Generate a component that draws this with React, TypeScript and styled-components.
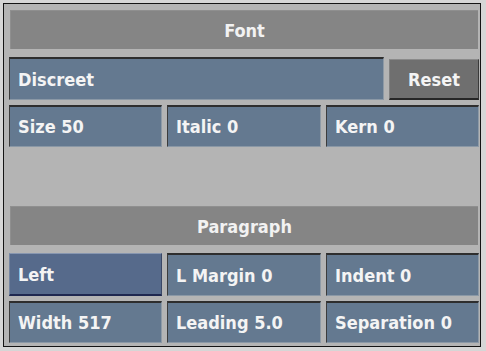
import styled, { createGlobalStyle } from 'styled-components';

const GlobalStyle = createGlobalStyle`
  html, body {
    margin: 0;
    padding: 0;
    background: #d6d6d6;
  }
  body {
    font-family: "DejaVu Sans Condensed", "DejaVu Sans", sans-serif;
  }
`;

const Frame = styled.div`
  box-sizing: border-box;
  margin: 3px 0 0 3px;
  width: 478px;
  height: 344px;
  border: 1px solid #141414;
  background: #b4b4b4;
  padding: 6px 1px 0 5px;
  display: flex;
  flex-direction: column;
`;

const Header = styled.div<{ $top?: number }>`
  box-sizing: border-box;
  height: 39px;
  margin: ${p => p.$top ?? 0}px 1px 0 1px;
  background: #858585;
  border-top: 1px solid #8f8f8f;
  border-left: 1px solid #8f8f8f;
  display: flex;
  align-items: center;
  justify-content: center;
  color: #f2f2f2;
  font-size: 18px;
  font-weight: bold;
`;

const Row = styled.div<{ $cols: string; $top: number; $height: number }>`
  display: grid;
  grid-template-columns: ${p => p.$cols};
  column-gap: 5px;
  margin-top: ${p => p.$top}px;
  height: ${p => p.$height}px;
`;

const Field = styled.div`
  box-sizing: border-box;
  background: #647990;
  border-top: 2px solid #2e2e2e;
  border-left: 1px solid #3c3c3c;
  border-right: 1px solid #8e9aa6;
  border-bottom: 1px solid #8a98a6;
  display: flex;
  align-items: center;
  padding-left: 8px;
  color: #f4f4f4;
  font-size: 18px;
  font-weight: bold;
  white-space: nowrap;
`;

const Button = styled.div<{ $tone: 'gray' | 'blue' }>`
  box-sizing: border-box;
  background: ${p => (p.$tone === 'gray' ? '#6f6f6f' : '#566a8b')};
  border-top: 1px solid ${p => (p.$tone === 'gray' ? '#8a8a8a' : '#8796b0')};
  border-left: 1px solid ${p => (p.$tone === 'gray' ? '#828282' : '#7485a2')};
  border-right: 1px solid ${p => (p.$tone === 'gray' ? '#3a3a3a' : '#3a4766')};
  border-bottom: 2px solid ${p => (p.$tone === 'gray' ? '#262626' : '#1f2850')};
  display: flex;
  align-items: center;
  justify-content: ${p => (p.$tone === 'gray' ? 'center' : 'flex-start')};
  padding-left: ${p => (p.$tone === 'gray' ? 0 : 8)}px;
  color: #f4f4f4;
  font-size: 18px;
  font-weight: bold;
`;

const ResetButton = styled(Button)`
  margin-top: 2px;
  height: 41px;
`;

export default function App() {
  return (
    <>
      <GlobalStyle />
      <Frame>
        <Header>Font</Header>
        <Row $cols="375px 90px" $top={8} $height={41}>
          <Field>Discreet</Field>
          <ResetButton $tone="gray">Reset</ResetButton>
        </Row>
        <Row $cols="153px 154px 153px" $top={7} $height={42}>
          <Field>Size 50</Field>
          <Field>Italic 0</Field>
          <Field>Kern 0</Field>
        </Row>
        <Header $top={59}>Paragraph</Header>
        <Row $cols="153px 154px 153px" $top={8} $height={43}>
          <Button $tone="blue">Left</Button>
          <Field>L Margin 0</Field>
          <Field>Indent 0</Field>
        </Row>
        <Row $cols="153px 154px 153px" $top={5} $height={42}>
          <Field>Width 517</Field>
          <Field>Leading 5.0</Field>
          <Field>Separation 0</Field>
        </Row>
      </Frame>
    </>
  );
}
